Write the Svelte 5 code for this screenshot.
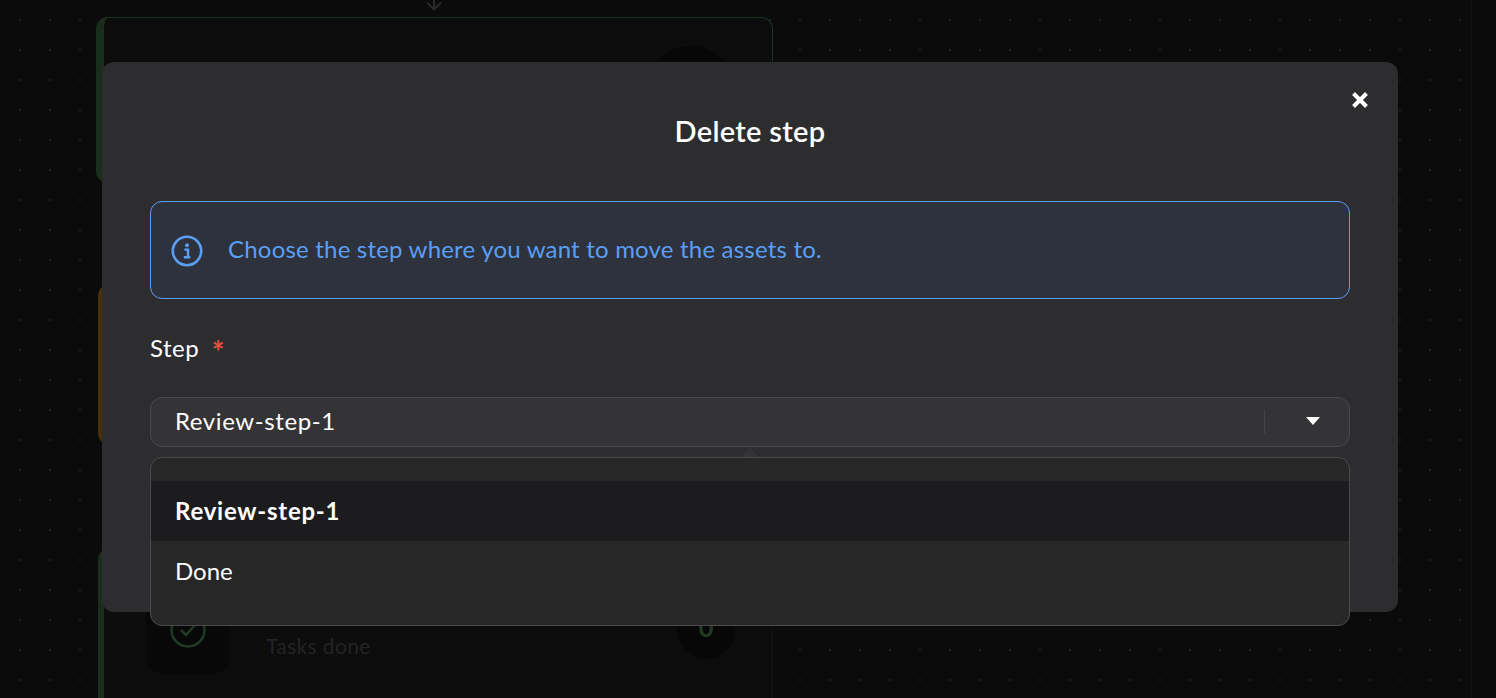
<script>
    let steps = ['Review-step-1', 'Done'];
    let selected = $state('Review-step-1');
</script>

<div class="canvas">
    <svg class="arrow" width="20" height="12" viewBox="0 0 20 12">
        <path d="M10 -6V9M3 2.5l7 7 7-7" fill="none" stroke="#2a2a2c" stroke-width="2" />
    </svg>

    <div class="node green first">
        <div class="count big"></div>
    </div>
    <div class="node orange second"></div>
    <div class="node green third">
        <div class="icon_box">
            <svg width="38" height="38" viewBox="0 0 38 38" fill="none" stroke="#1f3a25" stroke-width="2.5">
                <circle cx="19" cy="19" r="16.5" />
                <path d="M12 19l5 5 9-10" />
            </svg>
        </div>
        <span class="node_label">Tasks done</span>
        <div class="count">0</div>
    </div>
    <div class="edge"></div>
</div>

<main class="modal">
    <button class="close" aria-label="Close">
        <svg width="20" height="20" viewBox="0 0 20 20">
            <path d="M3.5 3.5l13 13M16.5 3.5l-13 13" stroke="#fff" stroke-width="4" />
        </svg>
    </button>

    <h1>Delete step</h1>

    <div class="alert">
        <svg width="32" height="32" viewBox="0 0 32 32" fill="none">
            <circle cx="16" cy="16" r="14.2" stroke="#5a9ff5" stroke-width="2.6" />
            <circle cx="16" cy="10.2" r="2" fill="#5a9ff5" />
            <path d="M13.4 14.6h3.6v7M12.8 22.2h6.4" stroke="#5a9ff5" stroke-width="2.4" />
        </svg>
        <p>Choose the step where you want to move the assets to.</p>
    </div>

    <div class="label">Step <span class="required">*</span></div>

    <div class="field">
        <div class="select">
            <span class="value">{selected}</span>
            <div class="select_end">
                <span class="divider"></span>
                <span class="caret"></span>
            </div>
        </div>
        <span class="notch"></span>
        <ul class="menu">
            {#each steps as step}
                <li class:active={step === selected}>{step}</li>
            {/each}
        </ul>
    </div>
</main>

<style>
    :global(body) {
        background-color: #0b0b0c;
        font-family: Lato, "Noto Sans", sans-serif;
        color: #fff;
    }

    .canvas {
        position: relative;
        height: 698px;
        overflow: hidden;
        background-color: #0b0b0c;
        background-image: radial-gradient(#1f1f21 1px, transparent 1.2px);
        background-size: 30px 30px;
        background-position: 5px 5px;
    }

    .arrow {
        position: absolute;
        left: 424px;
        top: 0;
    }

    .edge {
        position: absolute;
        left: 1471px;
        top: 0;
        bottom: 0;
        right: 0;
        background: #0b0b0c;
        border-left: 1px solid #111112;
    }

    .node {
        position: absolute;
        left: 98px;
        width: 675px;
        box-sizing: border-box;
        background: #0c0c0d;
        border: 1px solid #1c3320;
        border-left: 6px solid #1a2e1e;
        border-radius: 12px;
    }

    .first {
        left: 96px;
        width: 677px;
        border-left-width: 8px;
        top: 17px;
        height: 166px;
    }

    .second {
        top: 284px;
        height: 161px;
        border-color: #4a2f0d;
    }

    .third {
        top: 548px;
        height: 170px;
        border-right-color: #141415;
    }

    .count {
        position: absolute;
        left: 573px;
        top: 52px;
        width: 58px;
        height: 58px;
        border-radius: 50%;
        background: #070707;
        color: #1f3a25;
        font-size: 26px;
        font-weight: 700;
        text-align: center;
        line-height: 52px;
    }

    .count.big {
        left: 542px;
        top: 28px;
        width: 90px;
        height: 90px;
    }

    .icon_box {
        position: absolute;
        left: 42px;
        top: 40px;
        width: 84px;
        height: 84px;
        box-sizing: border-box;
        padding-bottom: 3px;
        border-radius: 14px;
        background: #080808;
        display: flex;
        align-items: center;
        justify-content: center;
    }

    .node_label {
        position: absolute;
        left: 162px;
        top: 84px;
        font-size: 21px;
        letter-spacing: 0.35px;
        color: #232325;
    }

    .modal {
        position: absolute;
        left: 102px;
        top: 62px;
        width: 1296px;
        height: 550px;
        box-sizing: border-box;
        padding: 48px;
        background: #2d2d2f;
        border-radius: 12px;
        display: flex;
        flex-direction: column;
    }

    .close {
        position: absolute;
        top: 28px;
        right: 28px;
        padding: 0;
        border: 0;
        background: none;
        display: flex;
    }

    h1 {
        margin: 0;
        height: 44px;
        font-size: 29px;
        letter-spacing: 0.3px;
        line-height: 41px;
        font-weight: 600;
        text-align: center;
    }

    .alert {
        margin-top: 47px;
        height: 98px;
        box-sizing: border-box;
        padding: 0 20px;
        display: flex;
        align-items: center;
        gap: 25px;
        background: #2e323c;
        border: 1px solid #5a9ff5;
        border-radius: 12px;
    }

    .alert svg {
        margin-top: 2px;
    }

    .alert p {
        margin: 0 0 4px;
        font-size: 24px;
        letter-spacing: 0.2px;
        color: #5a9ff5;
    }

    .label {
        margin-top: 34px;
        font-size: 24px;
        letter-spacing: 0.5px;
        line-height: 30px;
    }

    .required {
        margin-left: 6px;
        font-size: 30px;
        font-weight: 700;
        line-height: 20px;
        vertical-align: -6px;
        color: #e8503f;
    }

    .field {
        position: relative;
        margin-top: 34px;
    }

    .select {
        height: 50px;
        box-sizing: border-box;
        padding: 0 24px;
        display: flex;
        align-items: center;
        justify-content: space-between;
        background: #343436;
        border: 1px solid #4a4a4c;
        border-radius: 12px;
        font-size: 24px;
    }

    .value {
        margin-bottom: 3px;
        letter-spacing: 0.6px;
    }

    .select_end {
        display: flex;
        align-items: center;
        gap: 41px;
        padding-right: 5px;
    }

    .divider {
        width: 1px;
        height: 24px;
        background: #464648;
    }

    .caret {
        width: 0;
        height: 0;
        margin-bottom: 2px;
        border-left: 7px solid transparent;
        border-right: 7px solid transparent;
        border-top: 8px solid #fff;
    }

    .notch {
        position: absolute;
        left: 591px;
        top: 50px;
        width: 18px;
        height: 10px;
        background: #343436;
        clip-path: polygon(50% 0, 100% 100%, 0 100%);
    }

    .menu {
        position: absolute;
        left: 0;
        right: 0;
        top: 60px;
        margin: 0;
        padding: 23px 0 24px;
        list-style: none;
        background: #272728;
        border: 1px solid #4a4a4c;
        border-radius: 12px;
    }

    .menu li {
        height: 60px;
        box-sizing: border-box;
        padding: 0 24px 2px;
        display: flex;
        align-items: center;
        font-size: 24px;
    }

    .menu li.active {
        background: #1c1c1e;
        font-weight: 700;
        letter-spacing: 0.75px;
    }
</style>
